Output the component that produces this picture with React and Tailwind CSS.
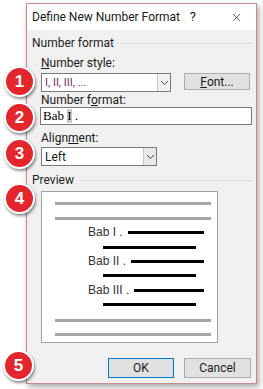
import { X } from "lucide-react";

function Badge({ n, className }) {
  return (
    <div
      className={
        "absolute w-[31px] h-[31px] rounded-full bg-[#e3262c] border-2 border-white shadow-[1px_2px_3px_rgba(0,0,0,0.45)] flex items-center justify-center text-white font-bold text-[17px] " +
        className
      }
      style={{ fontFamily: '"Liberation Sans", Arial, sans-serif' }}
    >
      {n}
    </div>
  );
}

function GroupLabel({ children }) {
  return (
    <div className="h-[14px] flex items-center gap-[6px] pl-[5px] pr-[4px]">
      <span className="text-[#1e1e1e]">{children}</span>
      <div className="flex-1 h-px bg-[#dcdcdc]" />
    </div>
  );
}

function Chevron() {
  return (
    <svg width="9" height="6" viewBox="0 0 9 6">
      <path d="M1 1 L4.5 4.5 L8 1" fill="none" stroke="#444" strokeWidth="1" />
    </svg>
  );
}

function PreviewRow({ label }) {
  return (
    <div className="flex items-center pl-[46px] pr-[13px] h-[14px]">
      <span className="text-[12px] text-[#333]">{label}</span>
      <div className="ml-[5px] flex-1 h-[3px] bg-black" />
    </div>
  );
}

export default function App() {
  return (
    <div
      className="relative w-[263px] h-[389px] bg-white overflow-hidden text-[12px] leading-[14px] text-[#1a1a1a]"
      style={{ fontFamily: 'Roboto, "Noto Sans", sans-serif' }}
    >
      <div className="ml-[26px] mt-[3px] w-[231px] h-[381px] border border-[#c88a8a] bg-[#f0f0f0] shadow-[2px_3px_6px_rgba(0,0,0,0.35)] flex flex-col">
        {/* title bar */}
        <div className="h-[26px] shrink-0 bg-white flex items-center pl-[5px] pr-[13px]">
          <span className="flex-1">Define New Number Format</span>
          <span className="mr-[34px] text-[13px]">?</span>
          <X size={13} strokeWidth={1.3} color="#222" />
        </div>

        {/* body */}
        <div className="flex flex-col pt-[6px]">
          <GroupLabel>Number format</GroupLabel>

          <div className="pl-[14px] pr-[4px] flex flex-col">
            <div className="mt-[6px] h-[14px]">
              <span className="underline">N</span>umber style:
            </div>
            <div className="mt-[3px] flex items-start">
              <div className="w-[130px] h-[19px] bg-white border border-[#7a7a7a] flex items-center">
                <span className="flex-1 pl-[3px] text-[#6e2a6a] text-[11px]">I, II, III, ...</span>
                <div className="w-[13px] h-full border-l border-[#c8c8c8] bg-[#f2f2f2] flex items-center justify-center">
                  <Chevron />
                </div>
              </div>
              <div className="ml-[13px] w-[66px] h-[17px] bg-[#e1e1e1] border border-[#adadad] flex items-center justify-center">
                <span className="underline">F</span>ont...
              </div>
            </div>

            <div className="mt-[1px] h-[14px]">
              Number f<span className="underline">o</span>rmat:
            </div>
            <div
              className="mt-0 -ml-px w-[212px] h-[18px] bg-white border border-[#7a7a7a] flex items-center pl-[2px] text-[13px] text-black"
              style={{ fontFamily: '"Liberation Serif", "Times New Roman", serif' }}
            >
              Bab&nbsp;<span className="bg-[#c8c8c8]">I</span>&nbsp;.
            </div>

            <div className="mt-[6px] h-[14px]">
              Align<span className="underline">m</span>ent:
            </div>
            <div className="mt-[2px] w-[116px] h-[19px] bg-white border border-[#7a7a7a] flex items-center">
              <span className="flex-1 pl-[3px]">Left</span>
              <div className="w-[13px] h-full border-l border-[#c8c8c8] bg-[#e8e8e8] flex items-center justify-center">
                <Chevron />
              </div>
            </div>
          </div>

          <div className="mt-[7px]">
            <GroupLabel>Preview</GroupLabel>
          </div>

          <div
            className="ml-[14px] mt-[4px] w-[177px] h-[152px] bg-white border border-[#a0a0a0] flex flex-col pt-[10px]"
            style={{ fontFamily: '"Liberation Sans", Arial, sans-serif' }}
          >
            <div className="ml-[13px] w-[156px] h-[3px] bg-[#a6a6a6]" />
            <div className="ml-[13px] mt-[12px] w-[156px] h-[3px] bg-[#a6a6a6]" />

            <div className="mt-[5px]">
              <PreviewRow label="Bab I ." />
            </div>
            <div className="ml-[61px] mt-[7px] w-[93px] h-[3px] bg-black" />

            <div className="mt-[5px]">
              <PreviewRow label="Bab II ." />
            </div>
            <div className="ml-[61px] mt-[6px] w-[93px] h-[3px] bg-black" />

            <div className="mt-[6px]">
              <PreviewRow label="Bab III ." />
            </div>
            <div className="ml-[61px] mt-[6px] w-[93px] h-[3px] bg-black" />

            <div className="ml-[13px] mt-[13px] w-[156px] h-[3px] bg-[#a6a6a6]" />
            <div className="ml-[13px] mt-[11px] w-[156px] h-[3px] bg-[#a6a6a6]" />
          </div>

          <div className="mt-[15px] flex justify-end gap-[10px] pr-[5px]">
            <div className="w-[66px] h-[20px] bg-[#e1e1e1] border border-[#0078d7] flex items-center justify-center">
              OK
            </div>
            <div className="w-[67px] h-[20px] bg-[#e1e1e1] border border-[#adadad] flex items-center justify-center">
              Cancel
            </div>
          </div>
        </div>
      </div>

      <Badge n="1" className="left-[4px] top-[66px]" />
      <Badge n="2" className="left-[4px] top-[102px]" />
      <Badge n="3" className="left-[4px] top-[138px]" />
      <Badge n="4" className="left-[4px] top-[183px]" />
      <Badge n="5" className="left-[3px] top-[350px]" />
    </div>
  );
}
